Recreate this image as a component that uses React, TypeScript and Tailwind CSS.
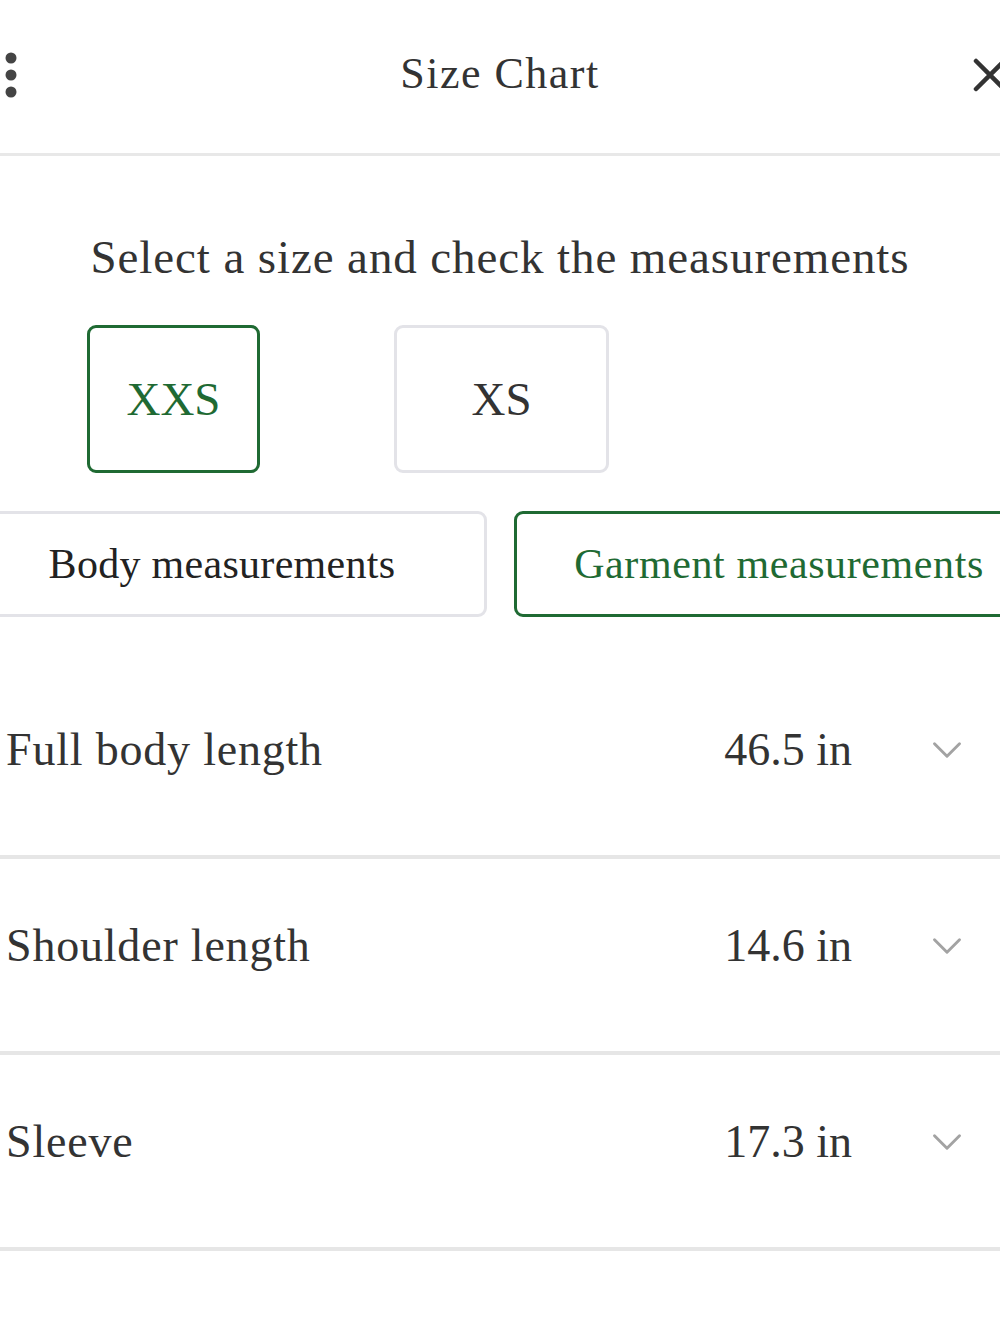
import { ChevronDown } from "lucide-react";

const rows = [
  { label: "Full body length", value: "46.5 in" },
  { label: "Shoulder length", value: "14.6 in" },
  { label: "Sleeve", value: "17.3 in" },
];

const App = () => {
  return (
    <div className="w-[1000px] min-h-[1333px] overflow-hidden bg-white text-[#333333] font-['Liberation_Serif',serif]">
      {/* Header */}
      <div className="relative flex h-[156px] items-center justify-center border-b-[3px] border-[#e8e8e8]">
        <svg
          className="absolute left-[4px] top-[50px]"
          width="16"
          height="50"
          viewBox="0 0 16 50"
        >
          <circle cx="7" cy="8" r="5.5" fill="#444" />
          <circle cx="7" cy="25" r="5.5" fill="#444" />
          <circle cx="7" cy="42" r="5.5" fill="#444" />
        </svg>
        <h1 className="text-[44px] leading-none tracking-[1.5px] pb-[6px]">
          Size Chart
        </h1>
        <svg
          className="absolute left-[972px] top-[57px]"
          width="36"
          height="36"
          viewBox="0 0 36 36"
        >
          <path
            d="M4 4 L32 32 M32 4 L4 32"
            stroke="#333"
            strokeWidth="4.5"
            strokeLinecap="round"
          />
        </svg>
      </div>

      {/* Size picker */}
      <p className="mt-[78px] text-center text-[47px] leading-none tracking-[0.9px]">
        Select a size and check the measurements
      </p>
      <div className="mt-[44px] ml-[87px] flex gap-[134px]">
        <button className="flex h-[148px] w-[173px] items-center justify-center rounded-[9px] border-[3px] border-[#1f6a33] text-[47px] text-[#1f6a33]">
          XXS
        </button>
        <button className="flex h-[148px] w-[215px] items-center justify-center rounded-[9px] border-[3px] border-[#e3e3e8] text-[47px]">
          XS
        </button>
      </div>

      {/* Measurement type */}
      <div className="mt-[38px] ml-[-43px] flex gap-[27px]">
        <button className="flex h-[106px] w-[530px] shrink-0 items-center justify-center rounded-[9px] border-[3px] border-[#e3e3e8] text-[42px] tracking-[0.3px] text-[#222]">
          Body measurements
        </button>
        <button className="flex h-[106px] w-[530px] shrink-0 items-center justify-center rounded-[9px] border-[3px] border-[#1f6a33] text-[42px] tracking-[0.6px] text-[#1f6a33]">
          Garment measurements
        </button>
      </div>

      {/* Measurements */}
      <div className="mt-[46px]">
        {rows.map((row) => (
          <div
            key={row.label}
            className="flex items-center border-b-[4px] border-[#e6e6e6] pt-[62px] pb-[80px]"
          >
            <span className="ml-[6px] flex-1 text-[46px] leading-[50px] tracking-[0.8px]">
              {row.label}
            </span>
            <span className="text-[46px] leading-[50px]">{row.value}</span>
            <ChevronDown
              className="ml-[70px] mr-[28px] text-[#a3a3a3]"
              size={50}
              strokeWidth={1.4}
            />
          </div>
        ))}
      </div>
    </div>
  );
};

export default App;
